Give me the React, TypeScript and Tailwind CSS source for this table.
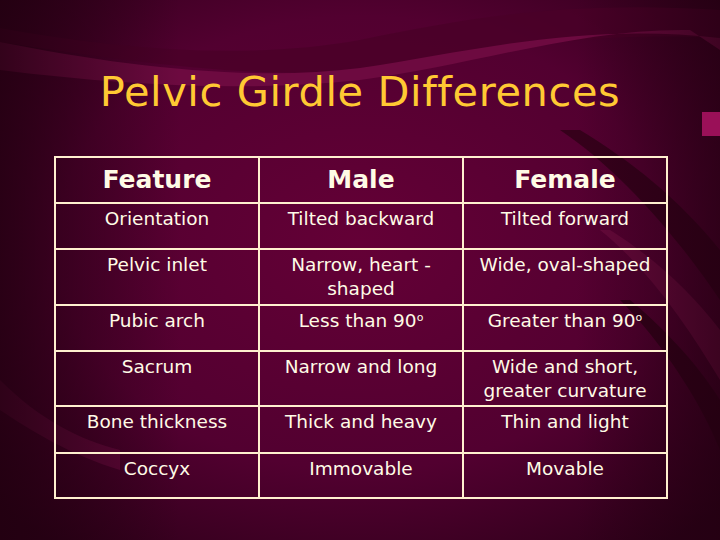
import React from "react";

const rows: { feature: string; male: string; female: string; h: string }[] = [
  { feature: "Orientation", male: "Tilted backward", female: "Tilted forward", h: "h-[46px]" },
  { feature: "Pelvic inlet", male: "Narrow, heart - shaped", female: "Wide, oval-shaped", h: "h-[56px]" },
  { feature: "Pubic arch", male: "Less than 90°", female: "Greater than 90°", h: "h-[46px]" },
  { feature: "Sacrum", male: "Narrow and long", female: "Wide and short, greater curvature", h: "h-[55px]" },
  { feature: "Bone thickness", male: "Thick and heavy", female: "Thin and light", h: "h-[47px]" },
  { feature: "Coccyx", male: "Immovable", female: "Movable", h: "h-[45px]" },
];

function Backdrop() {
  // decorative swooshes behind the slide
  return (
    <svg className="absolute inset-0" width="720" height="540" viewBox="0 0 720 540">
      <defs>
        <radialGradient id="glow" cx="0.5" cy="0.45" r="0.7">
          <stop offset="0" stopColor="#640036" />
          <stop offset="0.6" stopColor="#520030" />
          <stop offset="1" stopColor="#2c0018" />
        </radialGradient>
        <linearGradient id="fadeL" x1="0" x2="1">
          <stop offset="0" stopColor="#20000f" stopOpacity="0.75" />
          <stop offset="0.25" stopColor="#20000f" stopOpacity="0" />
          <stop offset="0.8" stopColor="#20000f" stopOpacity="0" />
          <stop offset="1" stopColor="#20000f" stopOpacity="0.6" />
        </linearGradient>
      </defs>
      <rect width="720" height="540" fill="url(#glow)" />
      {/* top band */}
      <path d="M0 42 C120 60 250 80 360 70 C470 58 560 30 720 38 L720 10 C560 0 460 20 360 40 C250 60 120 50 0 28 Z" fill="#4a0028" opacity="0.8" />
      <path d="M0 70 C130 86 250 92 360 80 C470 66 580 28 690 30 L720 50 L720 38 C580 22 470 52 360 68 C250 82 120 66 0 42 Z" fill="#6d0a40" />
      {/* right diagonal stripes */}
      <path d="M560 130 C620 170 680 240 720 300 L720 250 C680 200 630 160 580 130 Z" fill="#2e0016" opacity="0.8" />
      <path d="M600 230 C650 270 690 330 720 380 L720 330 C690 290 650 255 610 230 Z" fill="#6a0a3e" opacity="0.9" />
      <path d="M620 300 C660 340 700 400 720 450 L720 400 C695 360 660 325 630 300 Z" fill="#2a0014" opacity="0.8" />
      {/* lower left swoosh */}
      <path d="M0 380 C40 420 80 440 120 450 L120 470 C70 455 30 430 0 410 Z" fill="#6a0a3e" opacity="0.7" />
      <rect width="720" height="540" fill="url(#fadeL)" />
      {/* little tab at right */}
      <rect x="702" y="112" width="18" height="24" fill="#9a1058" />
    </svg>
  );
}

export default function App() {
  return (
    <div className="relative w-[720px] h-[540px] overflow-hidden bg-[#4c002a] font-['DejaVu_Sans',sans-serif]">
      <Backdrop />
      <div className="relative flex flex-col items-center">
        <h1 className="mt-[63px] text-[41.5px] leading-[58px] text-[#ffc933] tracking-[0.6px]">
          Pelvic Girdle Differences
        </h1>

        <table className="mt-[35px] ml-[2px] w-[614px] table-fixed border-collapse text-[#fffbe6]">
          <thead>
            <tr className="h-[46px]">
              {["Feature", "Male", "Female"].map((t) => (
                <th key={t} className="border-2 border-[#fff0cf] text-[25px] font-bold leading-[30px] align-middle">
                  {t}
                </th>
              ))}
            </tr>
          </thead>
          <tbody>
            {rows.map((r) => (
              <tr key={r.feature} className={r.h}>
                {[r.feature, r.male, r.female].map((c, i) => (
                  <td
                    key={i}
                    className="border-2 border-[#fff0cf] px-2 pt-[3px] align-top text-center text-[18.5px] leading-[24px]"
                  >
                    {c.endsWith("°") ? (
                      <>
                        {c.slice(0, -1)}
                        <span className="relative -top-[6px] text-[11px] leading-none">o</span>
                      </>
                    ) : (
                      c
                    )}
                  </td>
                ))}
              </tr>
            ))}
          </tbody>
        </table>
      </div>
    </div>
  );
}
